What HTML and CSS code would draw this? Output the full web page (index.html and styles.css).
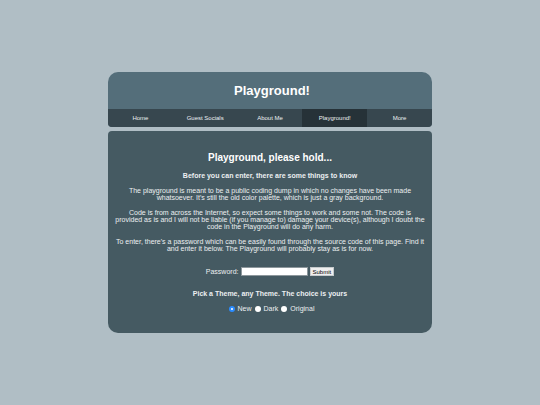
FILE: index.html
```html
<!DOCTYPE html>
<html lang="en">
<head>
<meta charset="utf-8">
<title>Playground!</title>
<link rel="stylesheet" href="styles.css">
</head>
<body>
<div class="page">
  <header class="banner">
    <h1 class="title">Playground!</h1>
    <nav class="nav">
      <a class="nav-link" href="#home">Home</a>
      <a class="nav-link" href="#socials">Guest Socials</a>
      <a class="nav-link" href="#about">About Me</a>
      <a class="nav-link active" href="#playground">Playground!</a>
      <a class="nav-link" href="#more">More</a>
    </nav>
  </header>
  <main class="content">
    <h2 class="heading">Playground, please hold...</h2>
    <h3 class="subheading">Before you can enter, there are some things to know</h3>
    <p class="text">The playground is meant to be a public coding dump in which no changes have been made whatsoever. It's still the old color palette, which is just a gray background.</p>
    <p class="text">Code is from across the Internet, so expect some things to work and some not. The code is<br>provided as is and I will not be liable (if you manage to) damage your device(s), although I doubt the<br>code in the Playground will do any harm.</p>
    <p class="text">To enter, there's a password which can be easily found through the source code of this page. Find it<br>and enter it below. The Playground will probably stay as is for now.</p>
    <form class="login">
      <label for="password">Password:</label>
      <input class="field" id="password" type="password">
      <button class="submit" type="submit">Submit</button>
    </form>
    <h3 class="subheading">Pick a Theme, any Theme. The choice is yours</h3>
    <form class="themes">
      <input class="radio" type="radio" name="theme" id="new" checked><label for="new">New</label>
      <input class="radio" type="radio" name="theme" id="dark"><label for="dark">Dark</label>
      <input class="radio" type="radio" name="theme" id="original"><label for="original">Original</label>
    </form>
  </main>
</div>
</body>
</html>
```
FILE: styles.css
```css
* { box-sizing: border-box; }

body {
  margin: 0;
  min-height: 100vh;
  display: flex;
  align-items: center;
  justify-content: center;
  background: #b0bec5;
  color: #eceff1;
  font: 7px/7px "Liberation Sans", Arial, sans-serif;
  text-align: center;
}

.page {
  width: 60%;
  display: flex;
  flex-direction: column;
  gap: 4px;
}

.banner {
  background: #546e7a;
  border-radius: 10px 10px 4px 4px;
  overflow: hidden;
}

.title {
  margin: 0;
  padding: 11px 0 11px 4px;
  font-size: 13px;
  line-height: 15px;
  color: #fff;
}

.nav {
  display: flex;
  background: #37474f;
}

.nav-link {
  flex: 1;
  padding: 6px 0;
  font-size: 6px;
  line-height: 6px;
  color: #eceff1;
  text-decoration: none;
}

.nav-link.active { background: #263238; }

.content {
  padding: 21px 4px;
  background: #455a62;
  border-radius: 4px 4px 10px 10px;
}

.heading {
  margin: 0 0 8px;
  font-size: 10px;
  line-height: 12px;
  color: #fff;
}

.subheading {
  margin: 0 0 8px;
  font-size: 7px;
  line-height: 7px;
}

.text {
  margin: 0 0 8px;
  line-height: 7px;
}

.login {
  display: flex;
  align-items: center;
  justify-content: center;
  gap: 2px;
  margin: 15px 0 14px;
}

.field {
  width: 67px;
  height: 9px;
  padding: 0 1px;
  border: 1px solid #8d979c;
  background: #fff;
  font: inherit;
}

.submit {
  height: 9px;
  padding: 0 2px;
  border: 1px solid #c5cacc;
  background: #efefef;
  color: #000;
  font: 6px/6px "Liberation Sans", Arial, sans-serif;
}

.themes {
  display: flex;
  align-items: center;
  justify-content: center;
}

.radio {
  appearance: none;
  width: 6px;
  height: 6px;
  margin: 0 3px;
  border-radius: 50%;
  background: #fff;
}

.radio:checked { border: 2px solid #2b8cff; }
```
